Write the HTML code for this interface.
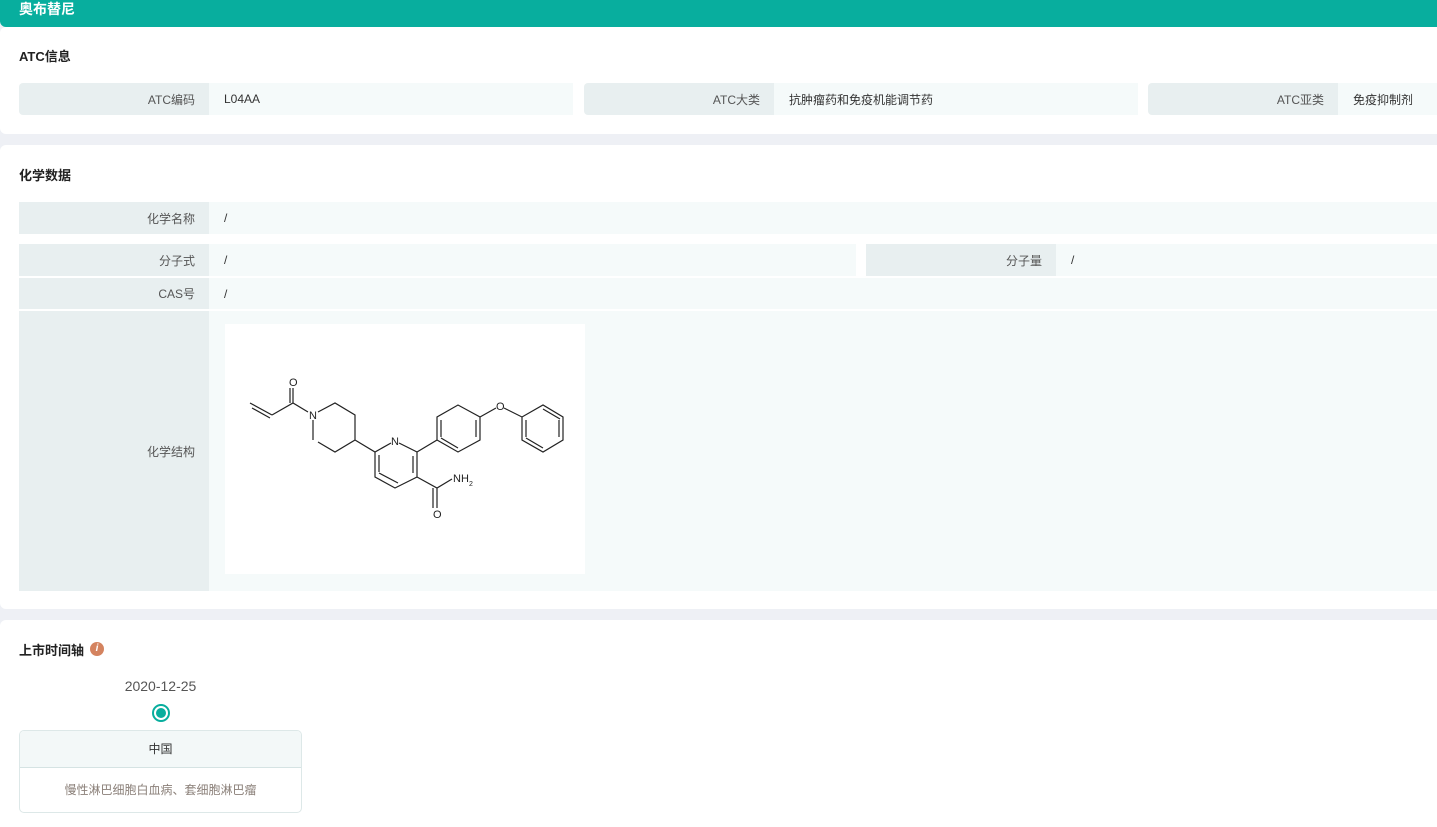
<!DOCTYPE html>
<html><head><meta charset="utf-8"><style>
*{margin:0;padding:0;box-sizing:border-box}
body{width:1437px;height:827px;background:#eef0f5;font-family:"Liberation Sans","Noto Sans CJK SC",sans-serif;font-size:12px;color:#333;position:relative;overflow:hidden}
.abs{position:absolute}
.hdr{left:0;top:0;width:1437px;height:27px;background:#08ae9e;border-radius:0 0 0 6px;color:#fff;font-weight:bold;font-size:14px;line-height:19px;padding-left:19px}
.card{left:0;width:1437px;background:#fff;border-radius:6px 0 0 6px}
.t{font-weight:bold;font-size:13px;color:#222}
.lb{background:#e8eff0;text-align:right;padding-right:14px;color:#555;display:flex;align-items:center;justify-content:flex-end}
.vl{background:#f5fafa;padding-left:15px;color:#333;display:flex;align-items:center}
</style></head><body>
<div class="abs hdr">奥布替尼</div>
<div class="abs card" style="top:27px;height:107px"></div>
<div class="abs t" style="left:19px;top:46px">ATC信息</div>
<div class="abs lb" style="left:19px;top:83px;width:190px;height:32px;border-radius:4px 0 0 4px">ATC编码</div>
<div class="abs vl" style="left:209px;top:83px;width:364px;height:32px">L04AA</div>
<div class="abs lb" style="left:584px;top:83px;width:190px;height:32px;border-radius:4px 0 0 4px">ATC大类</div>
<div class="abs vl" style="left:774px;top:83px;width:364px;height:32px">抗肿瘤药和免疫机能调节药</div>
<div class="abs lb" style="left:1148px;top:83px;width:190px;height:32px;border-radius:4px 0 0 4px">ATC亚类</div>
<div class="abs vl" style="left:1338px;top:83px;width:99px;height:32px">免疫抑制剂</div>

<div class="abs card" style="top:145px;height:464px"></div>
<div class="abs t" style="left:19px;top:165px">化学数据</div>
<div class="abs lb" style="left:19px;top:202px;width:190px;height:32px">化学名称</div>
<div class="abs vl" style="left:209px;top:202px;width:1228px;height:32px">/</div>
<div class="abs lb" style="left:19px;top:244px;width:190px;height:32px">分子式</div>
<div class="abs vl" style="left:209px;top:244px;width:647px;height:32px">/</div>
<div class="abs lb" style="left:866px;top:244px;width:190px;height:32px">分子量</div>
<div class="abs vl" style="left:1056px;top:244px;width:381px;height:32px">/</div>
<div class="abs lb" style="left:19px;top:278px;width:190px;height:31px">CAS号</div>
<div class="abs vl" style="left:209px;top:278px;width:1228px;height:31px">/</div>
<div class="abs lb" style="left:19px;top:311px;width:190px;height:280px">化学结构</div>
<div class="abs vl" style="left:209px;top:311px;width:1228px;height:280px"></div>
<div class="abs" style="left:225px;top:324px;width:360px;height:250px;background:#fff">
<svg width="360" height="250" viewBox="225 324 360 250" fill="none" stroke="#222" stroke-width="1.2">
<path d="M250 403L272 415M252 408L270 418M272 415L293 403L308 412M293 403V388M290 403V388M318 412L335 403L355 415V440L335 452L318 442M313 440V420M355 440L375 452L391 443M399 443L417 452V477L395 488L375 477V452M379 472V455M413 456V473M398 483L379 473M417 477L437 488L452 479M437 488V508M433 488V508M417 452L437 440V417L458 405L480 417V440L458 452L437 440M441 437V420M476 420V437M458 448L441 438M480 417L496 408M504 408L522 417L543 405L563 417V440L543 452L522 440V417M526 420V437M559 420V437M543 448L526 438M543 409L560 419"/>
<g fill="#222" stroke="none" font-family="Liberation Sans" font-size="11">
<text x="289" y="386">O</text><text x="309" y="419">N</text><text x="391" y="445">N</text><text x="496" y="410">O</text><text x="433" y="518">O</text><text x="453" y="482">NH</text><text x="469" y="486" font-size="7">2</text></g>
</svg></div>

<div class="abs card" style="top:620px;height:207px;border-radius:6px 0 0 0"></div>
<div class="abs t" style="left:19px;top:640px">上市时间轴</div>
<div class="abs" style="left:90px;top:642px;width:14px;height:14px;border-radius:50%;background:#d4835f;color:#fff;font-size:10px;font-style:italic;font-weight:bold;text-align:center;line-height:14px">i</div>
<div class="abs" style="left:19px;top:678px;width:283px;text-align:center;font-size:14px;color:#555">2020-12-25</div>
<div class="abs" style="left:152px;top:704px;width:18px;height:18px;border-radius:50%;border:2px solid #08ae9e;background:#fff"><div style="margin:2px;width:10px;height:10px;border-radius:50%;background:#08ae9e"></div></div>
<div class="abs" style="left:19px;top:730px;width:283px;height:83px;border:1px solid #dde8e8;border-radius:5px;overflow:hidden">
<div style="height:37px;background:#f3f8f8;border-bottom:1px solid #d5e3e3;text-align:center;line-height:37px;color:#333">中国</div>
<div style="text-align:center;line-height:44px;color:#8a7f78">慢性淋巴细胞白血病、套细胞淋巴瘤</div></div>
</body></html>
